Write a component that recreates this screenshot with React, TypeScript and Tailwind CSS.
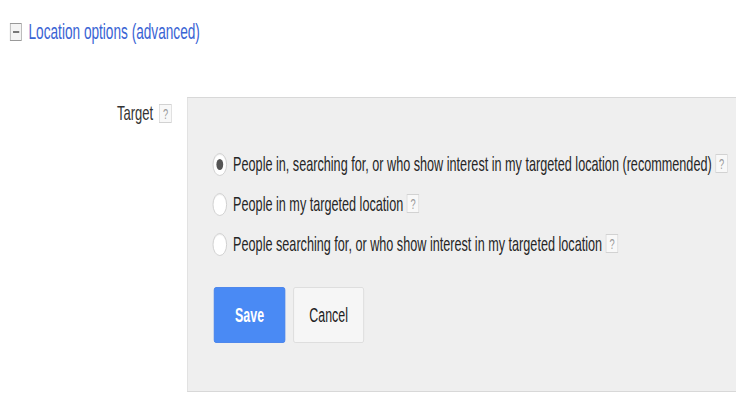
import React from "react";

const options = [
  { label: "People in, searching for, or who show interest in my targeted location (recommended)", checked: true },
  { label: "People in my targeted location", checked: false },
  { label: "People searching for, or who show interest in my targeted location", checked: false },
];

const HelpBox = () => (
  <span className="inline-flex items-center justify-center w-[20px] h-[19px] border border-[#d2d2d2] bg-[#f8f8f8] text-[15px] leading-none text-[#9a9a9a]">
    ?
  </span>
);

const Radio = ({ checked }: { checked: boolean }) => (
  <span className="flex items-center justify-center w-[23px] h-[23px] rounded-full border border-[#c8c8c8] bg-white shadow-[inset_0_1px_1px_rgba(0,0,0,0.08)]">
    {checked && <span className="w-[11px] h-[11px] rounded-full bg-[#555]" />}
  </span>
);

export default function App() {
  return (
    <div className="w-[736px] h-[414px] overflow-hidden bg-white font-['Liberation_Sans',Arial,sans-serif]">
      <div className="w-[1188px] origin-top-left scale-x-[0.62]">
        {/* header */}
        <div className="flex items-center gap-[11px] pl-[16px] pt-[21px] h-[42px]">
          <span className="flex items-center justify-center w-[19px] h-[18px] border border-[#999] bg-[#f4f4f4]">
            <span className="w-[10px] h-[2px] bg-[#777]" />
          </span>
          <span className="text-[22px] text-[#3a64d4] leading-none whitespace-nowrap">Location options (advanced)</span>
        </div>

        {/* target row */}
        <div className="flex mt-[55px]">
          <div className="w-[302px] shrink-0 flex justify-end items-center gap-[10px] pr-[25px] h-[30px] mt-[1px]">
            <span className="text-[21px] text-[#333]">Target</span>
            <HelpBox />
          </div>
          <div className="flex-1 h-[295px] bg-[#efefef] border border-[#d8d8d8] border-r-0 pl-[40px] pt-[46px]">
            <div className="flex flex-col">
              {options.map((o) => (
                <div key={o.label} className="flex items-center h-[40px] gap-[10px]">
                  <Radio checked={o.checked} />
                  <span className="flex items-center gap-[6px] text-[20.4px] text-[#262626] whitespace-nowrap">
                    {o.label}
                    <HelpBox />
                  </span>
                </div>
              ))}
            </div>
            <div className="flex gap-[13px] mt-[23px] ml-[2px]">
              <button className="w-[115px] h-[56px] rounded-[3px] border border-[#3d7cea] bg-[#4a8af4] text-white font-bold text-[20px]">
                Save
              </button>
              <button className="w-[114px] h-[56px] rounded-[3px] border border-[#d9d9d9] bg-[#f6f6f6] text-[#222] text-[20px]">
                Cancel
              </button>
            </div>
          </div>
        </div>
      </div>
    </div>
  );
}
